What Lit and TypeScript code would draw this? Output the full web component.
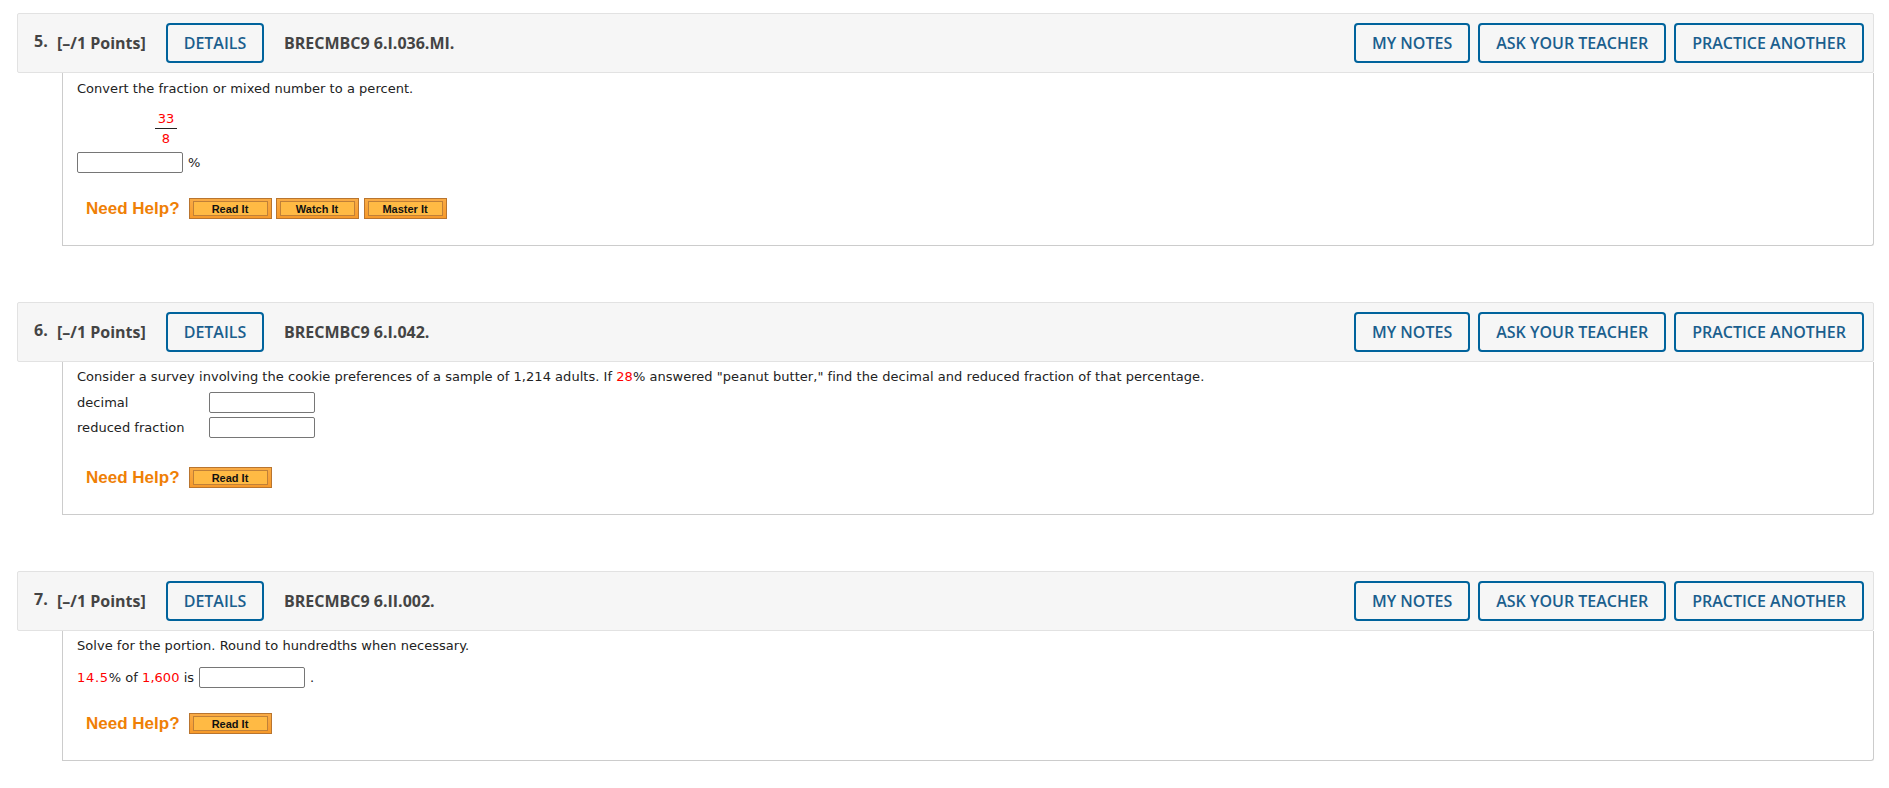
import { LitElement, html, css } from "lit";
import { customElement, property } from "lit/decorators.js";

@customElement("question-card")
class QuestionCard extends LitElement {
  @property() num = "";
  @property() code = "";
  @property({ type: Array }) help: string[] = [];

  static styles = css`
    :host {
      display: block;
      margin-bottom: 56px;
    }
    .head {
      display: flex;
      align-items: center;
      box-sizing: border-box;
      height: 60px;
      padding: 0 9px 0 16px;
      background: #f6f6f6;
      border: 1px solid #e2e2e2;
      border-radius: 2px;
      font-family: "Open Sans", sans-serif;
      font-size: 16px;
      font-weight: 600;
      color: #444;
    }
    .num {
      width: 23px;
      margin-bottom: 4px;
      font-weight: 700;
    }
    .points {
      width: 109px;
      font-weight: 700;
      white-space: nowrap;
    }
    .code {
      margin-left: 20px;
      flex: 1;
      font-weight: 700;
    }
    .btn {
      box-sizing: border-box;
      height: 40px;
      margin-left: 8px;
      padding: 0 16px;
      background: transparent;
      border: 2px solid #00639c;
      border-radius: 4px;
      font: inherit;
      color: #1b5f8e;
      white-space: nowrap;
    }
    .btn.first {
      width: 98px;
      margin-left: 0;
      padding: 0;
    }
    .body {
      margin-left: 45px;
      padding: 7px 0 26px 14px;
      background: #fff;
      border: 1px solid #ccc;
      border-top: 0;
      border-bottom-right-radius: 3px;
      font-family: "DejaVu Sans", sans-serif;
      font-size: 13px;
      line-height: 16px;
      letter-spacing: 0.035px;
      color: #222;
    }
    .help {
      display: flex;
      align-items: center;
      height: 21px;
      margin-left: 9px;
    }
    .help-label {
      width: 103px;
      font-family: "Liberation Sans", sans-serif;
      font-size: 17px;
      font-weight: 700;
      letter-spacing: 0;
      color: #ef8006;
    }
    .tool {
      box-sizing: border-box;
      width: 83px;
      height: 21px;
      margin-right: 4px;
      padding: 0;
      background: linear-gradient(#f9ab45, #f79a2a);
      border: 1px solid #b9752f;
      font-family: "Liberation Sans", sans-serif;
      font-size: 11px;
      font-weight: 700;
      letter-spacing: 0;
      color: #111;
    }
    .tool span {
      display: block;
      box-sizing: border-box;
      margin: 2px 3px;
      height: 15px;
      padding-right: 1px;
      line-height: 14px;
      background: #ffba44;
      border: 1px solid #c08038;
    }
    .tool.wide {
      margin-left: 1px;
    }
  `;

  render() {
    return html`
      <div class="head">
        <span class="num">${this.num}.</span>
        <span class="points">[–/1 Points]</span>
        <button class="btn first">DETAILS</button>
        <span class="code">${this.code}</span>
        <button class="btn">MY NOTES</button>
        <button class="btn">ASK YOUR TEACHER</button>
        <button class="btn">PRACTICE ANOTHER</button>
      </div>
      <div class="body">
        <slot></slot>
        <div class="help">
          <span class="help-label">Need Help?</span>
          ${this.help.map(
            (h) => html`<button class="tool ${h === "Master It" ? "wide" : ""}"><span>${h}</span></button>`
          )}
        </div>
      </div>
    `;
  }
}

@customElement("app-root")
class AppRoot extends LitElement {
  static styles = css`
    :host {
      display: block;
      padding: 13px 15px 0 17px;
      background: #fff;
    }
    .red {
      color: #f00;
    }
    .lead {
      margin-top: 1px;
    }
    .frac {
      display: flex;
      flex-direction: column;
      align-items: center;
      width: 22px;
      margin: 12px 0 0 78px;
      line-height: 19px;
    }
    .frac b {
      font-weight: 400;
      width: 100%;
      text-align: center;
    }
    .frac .top {
      border-bottom: 1px solid #222;
    }
    input {
      box-sizing: border-box;
      width: 106px;
      height: 21px;
      margin: 0;
      padding: 0 2px;
      background: #fff;
      border: 1px solid #767676;
      border-radius: 2px;
    }
    .line {
      display: flex;
      align-items: center;
      gap: 5px;
    }
    .q5 {
      margin: 4px 0 25px;
    }
    .grid {
      display: grid;
      grid-template-columns: 132px auto;
      justify-content: start;
      align-items: center;
      row-gap: 4px;
      margin: 7px 0 29px;
    }
    .q7 {
      margin: 13px 0 25px;
    }
    .q7 .rate {
      letter-spacing: 0.7px;
    }
  `;

  render() {
    return html`
      <question-card num="5" code="BRECMBC9 6.I.036.MI." .help=${["Read It", "Watch It", "Master It"]}>
        <div class="lead">Convert the fraction or mixed number to a percent.</div>
        <div class="frac">
          <b class="red top">33</b>
          <b class="red">8</b>
        </div>
        <div class="line q5"><input type="text" /><span>%</span></div>
      </question-card>
      <question-card num="6" code="BRECMBC9 6.I.042." .help=${["Read It"]}>
        <div>
          Consider a survey involving the cookie preferences of a sample of 1,214 adults. If
          <span class="red">28</span>% answered "peanut butter," find the decimal and reduced fraction of that
          percentage.
        </div>
        <div class="grid">
          <span>decimal</span><input type="text" />
          <span>reduced fraction</span><input type="text" />
        </div>
      </question-card>
      <question-card num="7" code="BRECMBC9 6.II.002." .help=${["Read It"]}>
        <div>Solve for the portion. Round to hundredths when necessary.</div>
        <div class="line q7">
          <span><span class="red rate">14.5</span>% of <span class="red">1,600</span> is</span>
          <input type="text" /><span>.</span>
        </div>
      </question-card>
    `;
  }
}
